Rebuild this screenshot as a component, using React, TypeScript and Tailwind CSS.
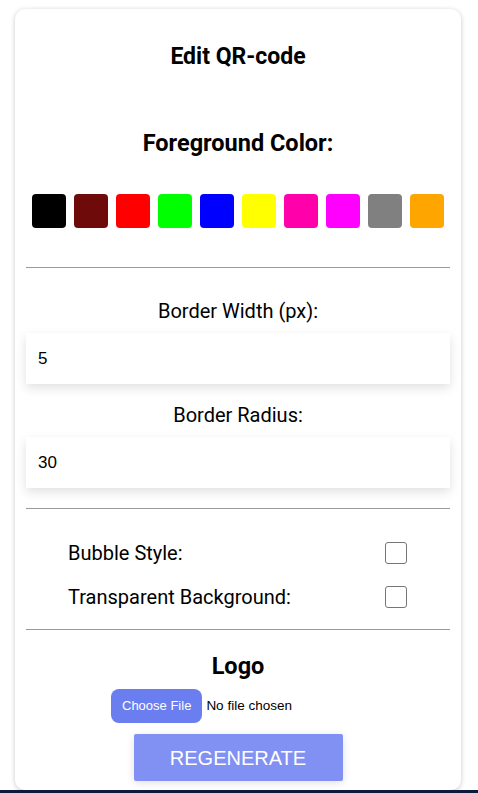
const swatches = [
  "#000000",
  "#6f0a0a",
  "#ff0000",
  "#00ff00",
  "#0000ff",
  "#ffff00",
  "#ff00aa",
  "#ff00ff",
  "#808080",
  "#ffa500",
];

function Divider() {
  return <div className="h-px bg-[#9a9a9a]" />;
}

function NumberField({ label, value, className }: { label: string; value: string; className?: string }) {
  return (
    <div className={className}>
      <div className="text-center text-[20px] leading-[27px] text-black">{label}</div>
      <div className="mt-[8px] h-[51px] flex items-center pl-[12px] bg-white shadow-[0_4px_10px_rgba(0,0,0,0.12)] font-['Liberation_Sans',sans-serif] text-[17px] text-black">
        {value}
      </div>
    </div>
  );
}

function CheckRow({ label }: { label: string }) {
  return (
    <div className="h-[44px] flex items-center justify-between pl-[42px] pr-[43px]">
      <span className="text-[20px] text-black">{label}</span>
      <span className="w-[22px] h-[22px] rounded-[3px] border border-[#767676] bg-white" />
    </div>
  );
}

export default function App() {
  return (
    <div className="w-[478px] h-[793px] bg-white flex flex-col font-['Roboto',sans-serif] overflow-hidden">
      <div className="pt-[9px] pl-[15px] pr-[17px] flex-1">
        <div className="h-[781px] rounded-[10px] bg-white shadow-[0_1px_5px_rgba(0,0,0,0.22)] px-[11px] pt-[34px] pb-[8px]">
          <h1 className="text-center text-[23px] leading-[28px] font-bold text-black">Edit QR-code</h1>
          <h2 className="mt-[56px] text-center text-[23.5px] leading-[32px] font-bold text-black">Foreground Color:</h2>
          <div className="mt-[35px] flex justify-center gap-[8px]">
            {swatches.map((c) => (
              <div key={c} className="w-[34px] h-[34px] rounded-[4px]" style={{ backgroundColor: c }} />
            ))}
          </div>
          <div className="mt-[39px]">
            <Divider />
          </div>
          <NumberField className="mt-[30px]" label="Border Width (px):" value="5" />
          <NumberField className="mt-[18px]" label="Border Radius:" value="30" />
          <div className="mt-[20px]">
            <Divider />
          </div>
          <div className="mt-[22px]">
            <CheckRow label="Bubble Style:" />
            <CheckRow label="Transparent Background:" />
          </div>
          <div className="mt-[10px]">
            <Divider />
          </div>
          <h2 className="mt-[20px] text-center text-[23.5px] leading-[32px] font-bold text-black">Logo</h2>
          <div className="mt-[7px] flex items-center font-['Liberation_Sans',sans-serif] text-[13px] pl-[85px]">
            <span className="h-[34px] px-[11px] flex items-center rounded-[8px] bg-[#6a7ef0] text-white">Choose File</span>
            <span className="ml-[4px] text-[13.5px] text-black">No file chosen</span>
          </div>
          <div className="mt-[11px] flex justify-center">
            <button className="w-[209px] h-[47px] rounded-[2px] bg-[#8190f3] text-white text-[20px] font-['Liberation_Sans',sans-serif] shadow-[0_2px_8px_rgba(0,0,0,0.12)]">
              REGENERATE
            </button>
          </div>
        </div>
      </div>
      <div className="h-[3px] bg-[#0e1a3c]" />
    </div>
  );
}
